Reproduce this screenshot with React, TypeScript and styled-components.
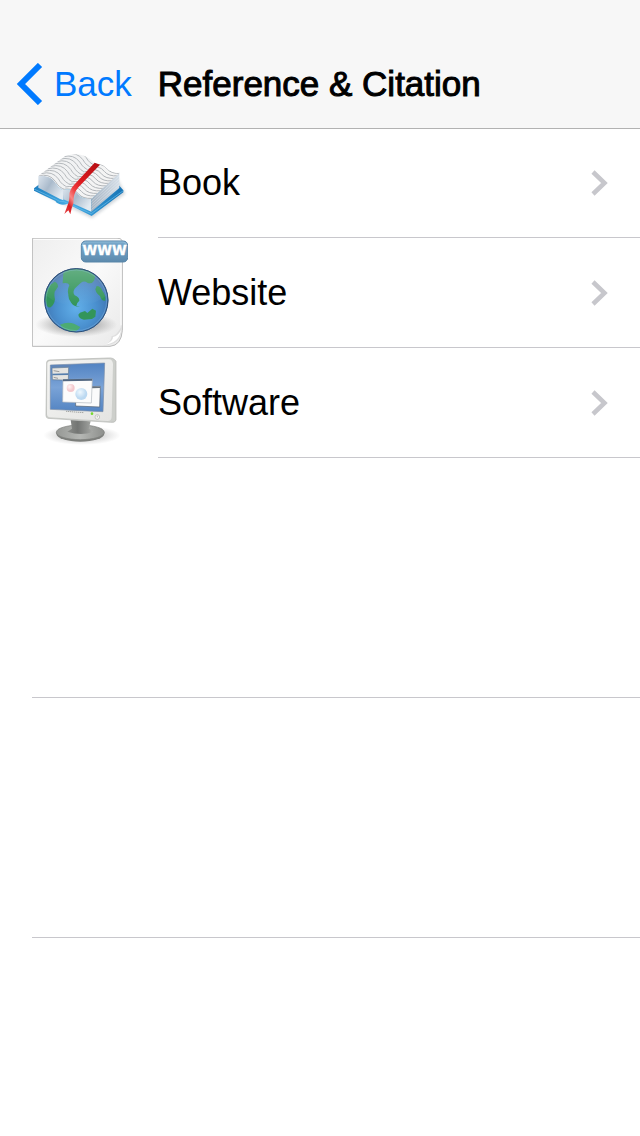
import React from 'react';
import styled, { createGlobalStyle } from 'styled-components';

const GlobalStyle = createGlobalStyle`
  *, *::before, *::after { box-sizing: border-box; }
  body {
    margin: 0;
    background: #fff;
    color: #000;
    font-family: "Liberation Sans", Arial, sans-serif;
  }
`;

const Page = styled.div`
  min-height: 100vh;
  background: #fff;
`;

const NavBar = styled.header`
  display: flex;
  align-items: center;
  gap: 26px;
  height: 128px;
  padding: 40px 16px 0;
  background: #f7f7f7;
  box-shadow: 0 1px 0 #b2b2b2;
`;

const BackButton = styled.button`
  display: flex;
  align-items: center;
  gap: 10px;
  padding: 0;
  border: 0;
  background: none;
  color: #007aff;
  font: inherit;
  font-size: 35px;
  line-height: 40px;
  cursor: pointer;
`;

const Title = styled.h1`
  margin: 0;
  font-size: 35px;
  font-weight: 400;
  line-height: 40px;
  white-space: nowrap;
  -webkit-text-stroke: 1px currentColor;
`;

const List = styled.ul`
  margin: 0;
  padding: 0 0 0 32px;
  list-style: none;
`;

const Item = styled.li<{ $empty?: boolean }>`
  height: ${(p) => (p.$empty ? '240px' : '110px')};
  border-bottom: ${(p) => (p.$empty ? '1px solid #c8c7cc' : '0')};
`;

const RowLink = styled.a`
  display: flex;
  gap: 30px;
  height: 100%;
  color: inherit;
  text-decoration: none;
`;

const Picture = styled.svg`
  flex: none;
  width: 96px;
  height: 110px;
`;

const RowBody = styled.span`
  display: flex;
  flex: 1;
  align-items: center;
  justify-content: space-between;
  padding-right: 32px;
  border-bottom: 1px solid #c8c7cc;
  font-size: 36px;
  line-height: 40px;
`;

const range = (n: number) => Array.from({ length: n }, (_, i) => i);

const BookIcon = () => (
  <Picture viewBox="24 -51 288 330" aria-hidden="true">
    <defs>
      <linearGradient id="bkCover" x1="0" x2="1">
        <stop offset="0" stopColor="#1f7fc0" />
        <stop offset=".4" stopColor="#46aee6" />
        <stop offset="1" stopColor="#1673b5" />
      </linearGradient>
      <linearGradient id="bkFront" x1="0" x2="1" y2=".6">
        <stop offset="0" stopColor="#dbe4ed" />
        <stop offset=".5" stopColor="#a9bacb" />
        <stop offset="1" stopColor="#e2eaf1" />
      </linearGradient>
      <linearGradient id="bkSide" x1="0" x2="1">
        <stop offset="0" stopColor="#a3b2c1" />
        <stop offset="1" stopColor="#d6dfe8" />
      </linearGradient>
      <linearGradient id="bkRibbon" x1="1" y1="0" x2="0" y2="1">
        <stop offset="0" stopColor="#b30d12" />
        <stop offset=".45" stopColor="#dc1a1e" />
        <stop offset=".62" stopColor="#ee3c3e" />
        <stop offset=".74" stopColor="#f98684" />
        <stop offset=".85" stopColor="#d91c20" />
        <stop offset="1" stopColor="#e8484a" />
      </linearGradient>
      <filter id="bkBlur" x="-20%" y="-20%" width="140%" height="140%">
        <feGaussianBlur stdDeviation="5" />
      </filter>
      <clipPath id="bkLeft">
        <path d="M43 93Q50 85 62 78L125 32Q160 22 184 34Q200 42 212 55L118 136Q100 128 94 112Q78 88 43 93Z" />
      </clipPath>
      <clipPath id="bkRight">
        <path d="M116 134L212 55Q234 56 246 68Q262 84 286 84L202 162Q176 164 164 150Q148 128 116 134Z" />
      </clipPath>
    </defs>
    <path d="M40 140L204 220L304 146L280 100Z" fill="#6b7a88" opacity=".3" filter="url(#bkBlur)" />
    <path d="M30 130L48 116L286 122L298 136V142L203 213L130 176Q118 182 106 177Q96 174 94 168L30 137Z" fill="url(#bkCover)" />
    <path d="M30 132L94 162Q106 172 120 170L202 206L298 137" fill="none" stroke="#6cc0ec" strokeWidth="2" />
    <path d="M43 93Q78 88 94 112Q100 128 118 136V166L108 162L43 128Z" fill="url(#bkFront)" />
    <path d="M116 134Q148 128 164 150Q176 164 202 162V200L118 163Z" fill="url(#bkFront)" />
    <path d="M202 162L286 82V129L202 200Z" fill="url(#bkSide)" />
    {range(4).map((i) => (
      <path key={i} d={`M202 ${170 + i * 8}L286 ${92 + i * 9}`} stroke="#f2f6fa" strokeWidth="2" opacity=".5" />
    ))}
    <path d="M43 93Q50 85 62 78L125 32Q160 22 184 34Q200 42 212 55L118 136Q100 128 94 112Q78 88 43 93Z" fill="#f1f2f3" />
    <g clipPath="url(#bkLeft)" fill="none" stroke="#b4b8bc" strokeWidth="3">
      {range(11).map((i) => (
        <path key={i} transform={`translate(${i * 9.2} ${i * -7.2})`} d="M43 93Q76 84 94 109Q104 128 124 134" />
      ))}
    </g>
    <path d="M116 134L212 55Q234 56 246 68Q262 84 286 84L202 162Q176 164 164 150Q148 128 116 134Z" fill="#f4f4f4" />
    <g clipPath="url(#bkRight)" fill="none" stroke="#b0b4b8" strokeWidth="3">
      {range(11).map((i) => (
        <path key={i} transform={`translate(${i * 8.6} ${i * -7.5})`} d="M112 134Q148 126 164 147Q176 162 204 160" />
      ))}
    </g>
    <path d="M212 53L228 59Q196 92 164 126Q150 142 149 160Q150 178 143 190L139 208L133 196L121 207L131 180Q137 168 136 148Q138 132 152 118Z" fill="url(#bkRibbon)" />
  </Picture>
);

const WebsiteIcon = () => (
  <Picture viewBox="24 18 288 330" aria-hidden="true">
    <defs>
      <linearGradient id="wbPaper" x1="0" y1="0" x2="1" y2="1">
        <stop offset="0" stopColor="#eeeeee" />
        <stop offset=".5" stopColor="#fafafa" />
        <stop offset="1" stopColor="#e9e9e9" />
      </linearGradient>
      <linearGradient id="wbTag" x2="0" y2="1">
        <stop offset="0" stopColor="#7aa9cc" />
        <stop offset=".5" stopColor="#6c9cc0" />
        <stop offset="1" stopColor="#5c8aad" />
      </linearGradient>
      <radialGradient id="wbSea" cx=".5" cy=".62" r=".62">
        <stop offset="0" stopColor="#62b0ea" />
        <stop offset=".5" stopColor="#4a90cf" />
        <stop offset=".85" stopColor="#3f74b2" />
        <stop offset="1" stopColor="#345a8c" />
      </radialGradient>
      <linearGradient id="wbGloss" x2="0" y2="1">
        <stop offset="0" stopColor="#fff" stopOpacity=".24" />
        <stop offset="1" stopColor="#fff" stopOpacity="0" />
      </linearGradient>
      <radialGradient id="wbShade">
        <stop offset="0" stopColor="#555" stopOpacity=".75" />
        <stop offset=".55" stopColor="#777" stopOpacity=".4" />
        <stop offset="1" stopColor="#888" stopOpacity="0" />
      </radialGradient>
      <clipPath id="wbGlobe"><circle cx="157" cy="205" r="95" /></clipPath>
    </defs>
    <path d="M25 19H282Q295 19 295 32V295Q292 340 258 343H25Z" fill="url(#wbPaper)" stroke="#b9b9b9" strokeWidth="3" />
    <path d="M28 22H280Q291 22 291 34V280" fill="none" stroke="#fff" strokeWidth="3" />
    <path d="M236 341Q262 332 263 312Q278 312 293 282Q296 340 236 341Z" fill="#dedede" />
    <path d="M240 338Q268 330 267 315Q282 312 291 294Q286 334 240 338Z" fill="#fff" />
    <ellipse cx="157" cy="278" rx="123" ry="37" fill="url(#wbShade)" />
    <circle cx="157" cy="205" r="96" fill="url(#wbSea)" />
    <g clipPath="url(#wbGlobe)" fill="#33955a">
      <path d="M118 122Q136 106 168 108Q196 113 214 132L210 146Q202 158 190 152Q180 145 170 153Q160 162 152 170Q145 180 152 190Q166 195 166 206Q158 212 157 222L168 224Q152 226 142 213Q132 202 133 187Q129 174 136 160Q133 150 116 154Z" />
      <path d="M92 149Q102 152 102 164L92 179Q90 190 93 202Q91 218 80 226Q68 228 66 212Q56 190 72 169Q78 156 92 149Z" />
      <path d="M218 162Q230 162 235 176Q246 190 244 206Q232 208 228 192Q216 184 214 172Z" />
      <path d="M168 242L183 237L190 243L205 230L216 236L214 254Q206 262 194 262L180 263Q164 260 163 248Z" />
      <path d="M108 278Q130 268 150 275L169 285Q162 300 138 300Q118 296 108 278Z" fill="#4cab72" />
    </g>
    <path d="M65 190A93 93 0 0 1 249 190Q200 226 157 220Q105 222 65 190Z" fill="url(#wbGloss)" />
    <circle cx="157" cy="205" r="91" fill="none" stroke="#8fc2e8" strokeWidth="3" opacity=".35" />
    <circle cx="157" cy="205" r="95" fill="none" stroke="#2f5078" strokeWidth="3" />
    <rect x="172" y="27" width="139" height="63" rx="13" fill="url(#wbTag)" stroke="#5885a8" strokeWidth="3" />
    <path d="M175 42Q175 30 188 30H297Q308 30 308 42" fill="none" stroke="#9cc2dd" strokeWidth="2" />
    <text x="242" y="69" textAnchor="middle" fill="#fff" stroke="#fff" strokeWidth="1" fontFamily="DejaVu Sans, sans-serif" fontWeight="700" fontSize="40">WWW</text>
  </Picture>
);

const SoftwareIcon = () => (
  <Picture viewBox="-6 -6 288 330" aria-hidden="true">
    <defs>
      <linearGradient id="swCase" x2="1" y2="1">
        <stop offset="0" stopColor="#f5f5f3" />
        <stop offset="1" stopColor="#e4e4e2" />
      </linearGradient>
      <linearGradient id="swScreen" x2="0" y2="1">
        <stop offset="0" stopColor="#5283c2" />
        <stop offset=".5" stopColor="#7aa3d7" />
        <stop offset="1" stopColor="#5384c2" />
      </linearGradient>
      <linearGradient id="swNeck" x2="1">
        <stop offset="0" stopColor="#8b8d8a" />
        <stop offset=".4" stopColor="#737573" />
        <stop offset="1" stopColor="#a8aaa7" />
      </linearGradient>
      <linearGradient id="swBase" x2="1">
        <stop offset="0" stopColor="#969895" />
        <stop offset=".5" stopColor="#b5b7b4" />
        <stop offset="1" stopColor="#8d8f8c" />
      </linearGradient>
      <radialGradient id="swShade">
        <stop offset="0" stopColor="#444" stopOpacity=".5" />
        <stop offset="1" stopColor="#777" stopOpacity="0" />
      </radialGradient>
      <radialGradient id="swRed" cx=".35" cy=".35">
        <stop offset="0" stopColor="#fff4f4" />
        <stop offset="1" stopColor="#f3c8cd" />
      </radialGradient>
      <radialGradient id="swBlue" cx=".4" cy=".35">
        <stop offset="0" stopColor="#eff8fe" />
        <stop offset="1" stopColor="#bcd9f1" />
      </radialGradient>
    </defs>
    <ellipse cx="144" cy="256" rx="116" ry="29" fill="url(#swShade)" />
    <ellipse cx="139" cy="251" rx="72" ry="24" fill="#7c7e7b" />
    <ellipse cx="139" cy="247" rx="72" ry="22" fill="url(#swBase)" stroke="#7b7d7a" strokeWidth="2" />
    <path d="M110 210L170 214L164 236Q174 240 178 246Q140 258 100 245L114 236Z" fill="url(#swNeck)" />
    <path d="M38 42Q36 31 47 30L222 24Q239 22 246 34V210Q244 219 230 217L42 205Q36 204 36 196Z" fill="#cdcfcb" stroke="#b2b4b0" strokeWidth="2" />
    <path d="M40 43Q39 34 50 33L224 28Q236 28 237 42L233 201Q232 213 221 213L48 202Q39 201 39 191Z" fill="url(#swCase)" />
    <path d="M49 45L212 39L207 185L49 178Z" fill="url(#swScreen)" stroke="#7c8ea8" strokeWidth="2" />
    <path d="M52 47L110 45V50L52 52Z" fill="#6285b4" />
    <path d="M54 54L104 52L103 91L55 89Z" fill="#e4e4e1" stroke="#62798f" strokeWidth="2" />
    <path d="M55 71L103 70V75L55 76Z" fill="#577fad" />
    <path d="M59 62L76 65M59 82L72 85" stroke="#777" strokeWidth="2" />
    <path d="M124 111L199 109L197 171L125 168Z" fill="#fbfbfb" stroke="#515d6b" strokeWidth="2" />
    <path d="M125 112L198 110V114L125 116Z" fill="#66727d" />
    <path d="M87 89L175 87L172 159L86 156Z" fill="#fcfcfc" stroke="#b2b8be" strokeWidth="2" />
    <path d="M87 88L175 86V92L87 94Z" fill="#526781" />
    <circle cx="110" cy="114" r="12" fill="url(#swRed)" />
    <circle cx="142" cy="132" r="18" fill="url(#swBlue)" />
    <path d="M96 184L150 188" stroke="#a5a7a4" strokeWidth="3" strokeDasharray="4 2" />
    <ellipse cx="174" cy="191" rx="4" ry="4" fill="#75d92f" />
    <circle cx="190" cy="201" r="7" fill="#f5f5f3" stroke="#b0b2af" strokeWidth="2" />
    <path d="M190 197V202" stroke="#999" strokeWidth="2" />
  </Picture>
);

const BackChevron = () => (
  <svg width="28" height="42" viewBox="0 0 28 42" aria-hidden="true">
    <path d="M24 2L5 21L24 40" fill="none" stroke="currentColor" strokeWidth="6" />
  </svg>
);

const Disclosure = () => (
  <svg width="18" height="26" viewBox="0 0 18 26" aria-hidden="true">
    <path d="M3 2L14.5 13L3 24" fill="none" stroke="#c7c7cc" strokeWidth="4.5" />
  </svg>
);

const entries = [
  { label: 'Book', Icon: BookIcon },
  { label: 'Website', Icon: WebsiteIcon },
  { label: 'Software', Icon: SoftwareIcon },
];

export default function App() {
  return (
    <Page>
      <GlobalStyle />
      <NavBar>
        <BackButton type="button">
          <BackChevron />
          Back
        </BackButton>
        <Title>Reference &amp; Citation</Title>
      </NavBar>
      <main>
        <List>
          {entries.map(({ label, Icon }) => (
            <Item key={label}>
              <RowLink href={`#${label.toLowerCase()}`}>
                <Icon />
                <RowBody>
                  {label}
                  <Disclosure />
                </RowBody>
              </RowLink>
            </Item>
          ))}
          <Item $empty aria-hidden="true" />
          <Item $empty aria-hidden="true" />
        </List>
      </main>
    </Page>
  );
}
